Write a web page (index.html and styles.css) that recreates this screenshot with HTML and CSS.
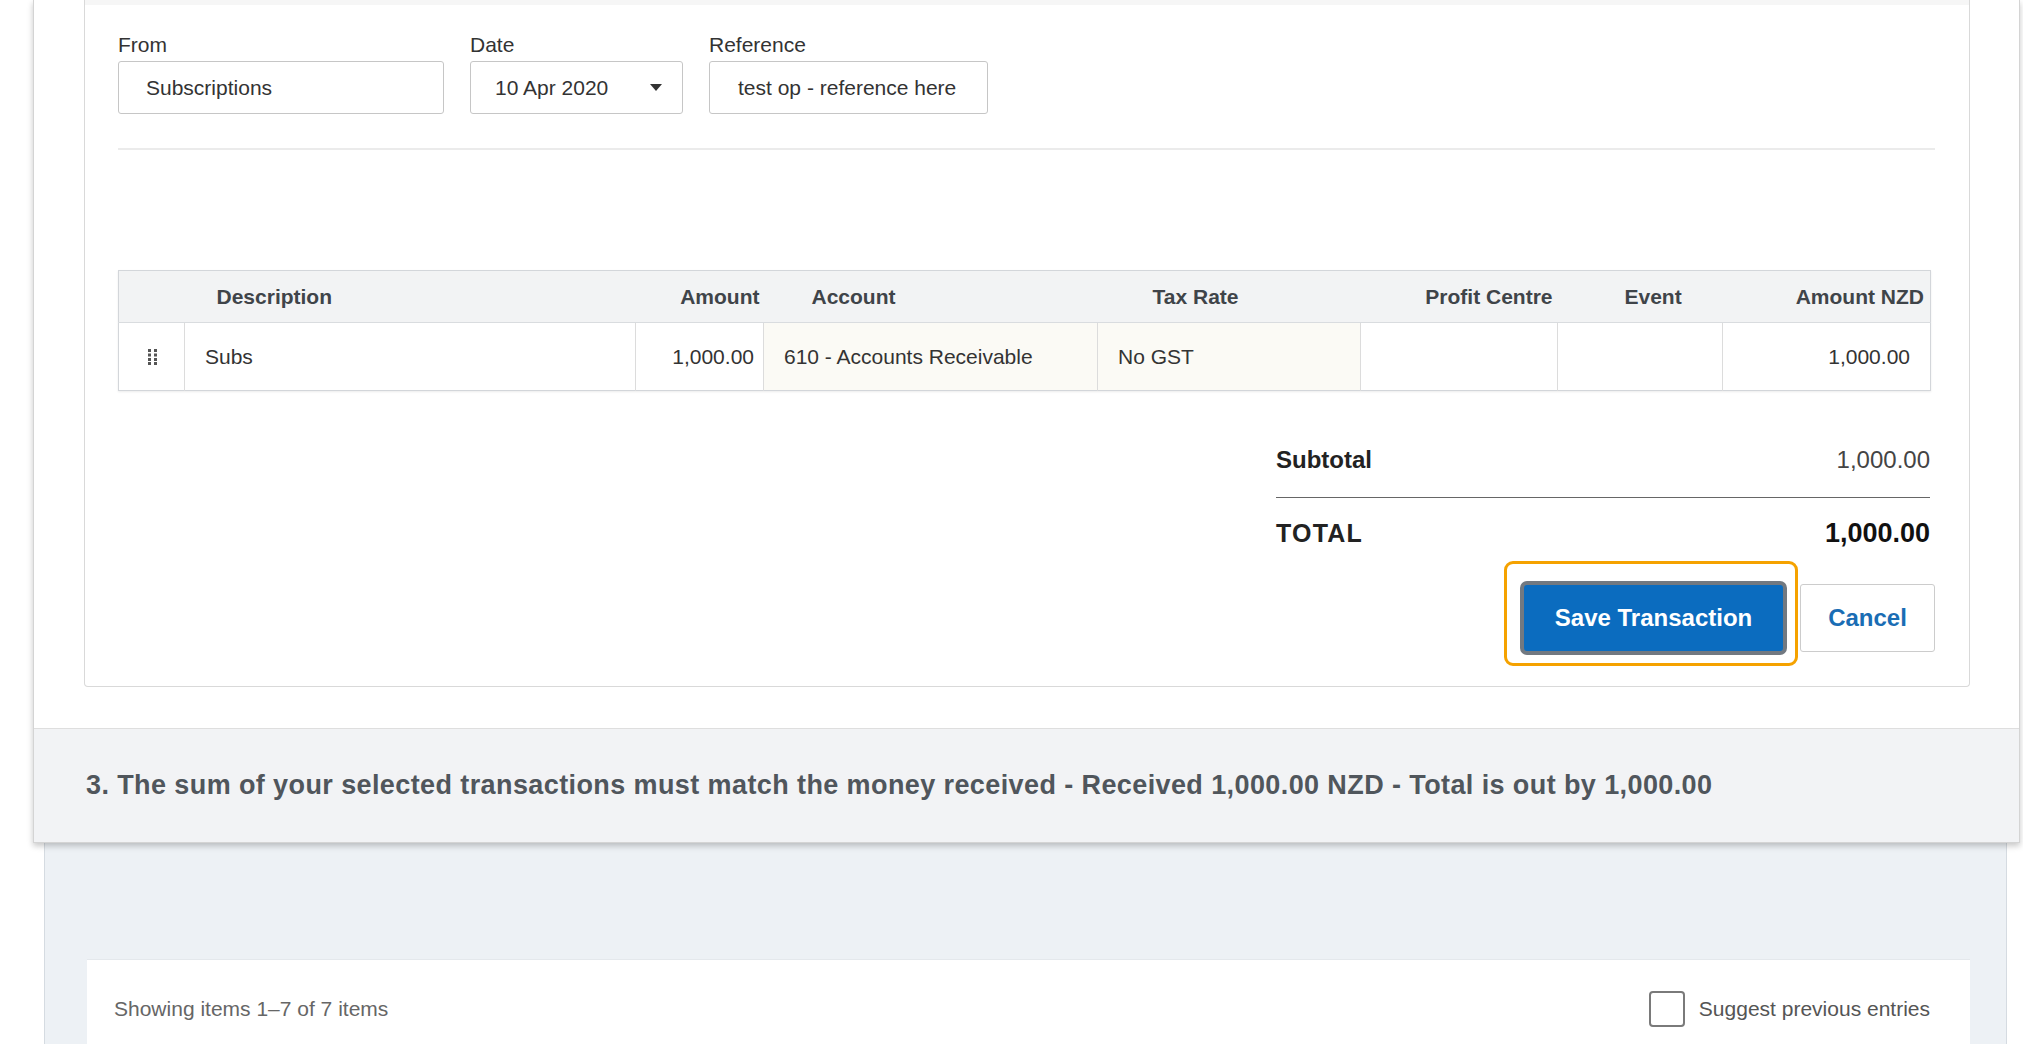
FILE: index.html
```html
<!DOCTYPE html>
<html>
<head>
    <meta charset="utf-8">
    <title>Bank Reconciliation - Create Transaction</title>
    <link rel="stylesheet" href="styles.css">
</head>
<body>
    <div class="match-card">
        <div class="create-panel">
            <div class="panel-strip"></div>

            <div class="field-row">
                <div class="field">
                    <label>From</label>
                    <div class="input input-from">Subscriptions</div>
                </div>
                <div class="field">
                    <label>Date</label>
                    <div class="input input-date">
                        <span>10 Apr 2020</span>
                        <svg class="caret" width="12" height="7" viewBox="0 0 12 7"><path d="M0 0 L12 0 L6 7 Z" fill="#333"/></svg>
                    </div>
                </div>
                <div class="field">
                    <label>Reference</label>
                    <div class="input input-ref">test op - reference here</div>
                </div>
            </div>

            <div class="divider"></div>

            <table class="lines">
                <colgroup>
                    <col style="width:66px">
                    <col style="width:451px">
                    <col style="width:128px">
                    <col style="width:334px">
                    <col style="width:263px">
                    <col style="width:197px">
                    <col style="width:165px">
                    <col style="width:208px">
                </colgroup>
                <thead>
                    <tr>
                        <th></th>
                        <th class="h-desc">Description</th>
                        <th class="h-amount">Amount</th>
                        <th class="h-account">Account</th>
                        <th class="h-tax">Tax Rate</th>
                        <th class="h-profit">Profit Centre</th>
                        <th class="h-event">Event</th>
                        <th class="h-nzd">Amount NZD</th>
                    </tr>
                </thead>
                <tbody>
                    <tr>
                        <td class="handle">
                            <svg width="10" height="16" viewBox="0 0 10 16">
                                <rect x="0" y="0" width="3" height="3" fill="#555"/>
                                <rect x="6" y="0" width="3" height="3" fill="#555"/>
                                <rect x="0" y="4.5" width="3" height="3" fill="#555"/>
                                <rect x="6" y="4.5" width="3" height="3" fill="#555"/>
                                <rect x="0" y="9" width="3" height="3" fill="#555"/>
                                <rect x="6" y="9" width="3" height="3" fill="#555"/>
                                <rect x="0" y="13" width="3" height="3" fill="#555"/>
                                <rect x="6" y="13" width="3" height="3" fill="#555"/>
                            </svg>
                        </td>
                        <td>Subs</td>
                        <td class="num num-tight">1,000.00</td>
                        <td class="tinted">610 - Accounts Receivable</td>
                        <td class="tinted">No GST</td>
                        <td></td>
                        <td></td>
                        <td class="num">1,000.00</td>
                    </tr>
                </tbody>
            </table>

            <div class="totals">
                <div class="total-row subtotal">
                    <span class="total-label">Subtotal</span>
                    <span>1,000.00</span>
                </div>
                <div class="total-row grand">
                    <span class="total-label">TOTAL</span>
                    <span class="grand-value">1,000.00</span>
                </div>
            </div>

            <div class="actions">
                <div class="focus-ring">
                    <button class="btn-save">Save Transaction</button>
                </div>
                <button class="btn-cancel">Cancel</button>
            </div>
        </div>

        <div class="match-status">
            3. The sum of your selected transactions must match the money received - Received 1,000.00 NZD - Total is out by 1,000.00
        </div>
    </div>

    <div class="lower">
        <div class="list-card">
            <span class="showing">Showing items 1–7 of 7 items</span>
            <label class="suggest">
                <span class="checkbox"></span>
                <span>Suggest previous entries</span>
            </label>
        </div>
    </div>
</body>
</html>
```

FILE: styles.css
```css
body {
    margin: 0;
    padding: 0 0 0 33px;
    background: #fff;
    color: #333;
    font-family: "Liberation Sans", Arial, sans-serif;
    font-size: 21px;
    overflow: hidden;
    height: 1044px;
}

.match-card {
    position: relative;
    z-index: 1;
    box-sizing: border-box;
    width: 1987px;
    background: #fff;
    border: 1px solid #d4d4d4;
    border-top: none;
    box-shadow: 0 3px 6px rgba(0, 0, 0, 0.22);
}

.create-panel {
    margin: 0 49px 0 50px;
    padding: 0 34px 20px 33px;
    border: 1px solid #d9d9d9;
    border-top: none;
    border-radius: 0 0 4px 4px;
}

.panel-strip {
    height: 5px;
    margin: 0 -34px 0 -33px;
    background: #f6f6f6;
}

.field-row {
    display: flex;
    gap: 26px;
    padding-top: 28px;
}

.field label {
    display: block;
    line-height: 24px;
    margin-bottom: 4px;
    color: #333;
}

.input {
    box-sizing: border-box;
    height: 53px;
    display: flex;
    align-items: center;
    border: 1px solid #c6c6c6;
    border-radius: 3px;
    background: #fff;
    color: #333;
}

.input-from {
    width: 326px;
    padding-left: 27px;
}

.input-date {
    width: 213px;
    padding-left: 24px;
    padding-right: 20px;
    justify-content: space-between;
}

.input-ref {
    width: 279px;
    padding-left: 28px;
}

.divider {
    height: 2px;
    margin-top: 34px;
    background: #ebebeb;
}

.lines {
    margin-top: 120px;
    width: 1812px;
    table-layout: fixed;
    border-collapse: collapse;
    border: 1px solid #d3d6da;
    box-shadow: 0 1px 2px rgba(0, 0, 0, 0.08);
}

.lines th {
    height: 51px;
    padding: 0;
    background: #f2f3f4;
    color: #3f4449;
    font-weight: bold;
    text-align: left;
    border-bottom: 1px solid #d9dcdf;
}

.lines .h-desc { padding-left: 32px; }
.lines .h-amount { text-align: right; padding-right: 4px; }
.lines .h-account { padding-left: 48px; }
.lines .h-tax { padding-left: 55px; }
.lines .h-profit { text-align: right; padding-right: 5px; }
.lines .h-event { padding-left: 67px; }
.lines .h-nzd { text-align: right; padding-right: 6px; }

.lines td {
    height: 67px;
    padding: 0 20px;
    border-left: 1px solid #dcdcdc;
    color: #333;
    white-space: nowrap;
}

.lines td.handle {
    border-left: none;
    padding: 0 0 0 29px;
}

.lines td.handle svg {
    display: block;
}

.lines td.num {
    text-align: right;
}

.lines td.num-tight {
    padding-right: 9px;
}

.lines td.tinted {
    background: #fbfaf5;
}

.totals {
    width: 654px;
    margin: 54px 5px 0 auto;
}

.total-row {
    display: flex;
    justify-content: space-between;
    line-height: 30px;
    font-size: 24px;
}

.total-row .total-label {
    font-weight: bold;
    color: #222;
}

.subtotal {
    padding-bottom: 22px;
    border-bottom: 1px solid #666;
    color: #444;
}

.grand {
    padding-top: 20px;
    font-weight: bold;
    color: #111;
}

.grand .total-label {
    font-size: 25px;
    letter-spacing: 1.2px;
}

.grand .grand-value {
    font-size: 27px;
}

.actions {
    display: flex;
    justify-content: flex-end;
    align-items: flex-start;
    gap: 2px;
    margin-top: 13px;
}

.focus-ring {
    border: 3px solid #f5a200;
    border-radius: 9px;
    padding: 17px 8px 8px 13px;
}

.btn-save {
    display: block;
    width: 267px;
    height: 74px;
    border: 4px solid #727981;
    border-radius: 7px;
    background: #0b6cbf;
    color: #fff;
    font-family: inherit;
    font-size: 24px;
    font-weight: bold;
    cursor: pointer;
}

.btn-cancel {
    margin-top: 23px;
    width: 135px;
    height: 68px;
    border: 1px solid #cccccc;
    border-radius: 3px;
    background: #fff;
    color: #1a6db4;
    font-family: inherit;
    font-size: 24px;
    font-weight: bold;
    cursor: pointer;
}

.match-status {
    margin-top: 41px;
    height: 113px;
    display: flex;
    align-items: center;
    padding-left: 52px;
    border-top: 1px solid #dedede;
    background: #f2f3f5;
    color: #50565c;
    font-size: 27px;
    letter-spacing: 0.4px;
    font-weight: bold;
}

.lower {
    margin-left: 11px;
    width: 1963px;
    box-sizing: border-box;
    height: 210px;
    padding-top: 116px;
    background: #edf1f5;
    border-left: 1px solid #d5dbe1;
    border-right: 1px solid #d5dbe1;
}

.list-card {
    margin-left: 42px;
    width: 1883px;
    height: 120px;
    box-sizing: border-box;
    display: flex;
    justify-content: space-between;
    align-items: flex-start;
    padding: 31px 40px 0 27px;
    background: #fff;
    border-top: 1px solid #e4e8ec;
}

.showing {
    color: #666;
    line-height: 36px;
}

.suggest {
    display: flex;
    align-items: center;
    gap: 14px;
    color: #555;
    line-height: 36px;
}

.checkbox {
    box-sizing: border-box;
    width: 36px;
    height: 36px;
    border: 2px solid #7a7a7a;
    border-radius: 4px;
    background: #fff;
}
```
